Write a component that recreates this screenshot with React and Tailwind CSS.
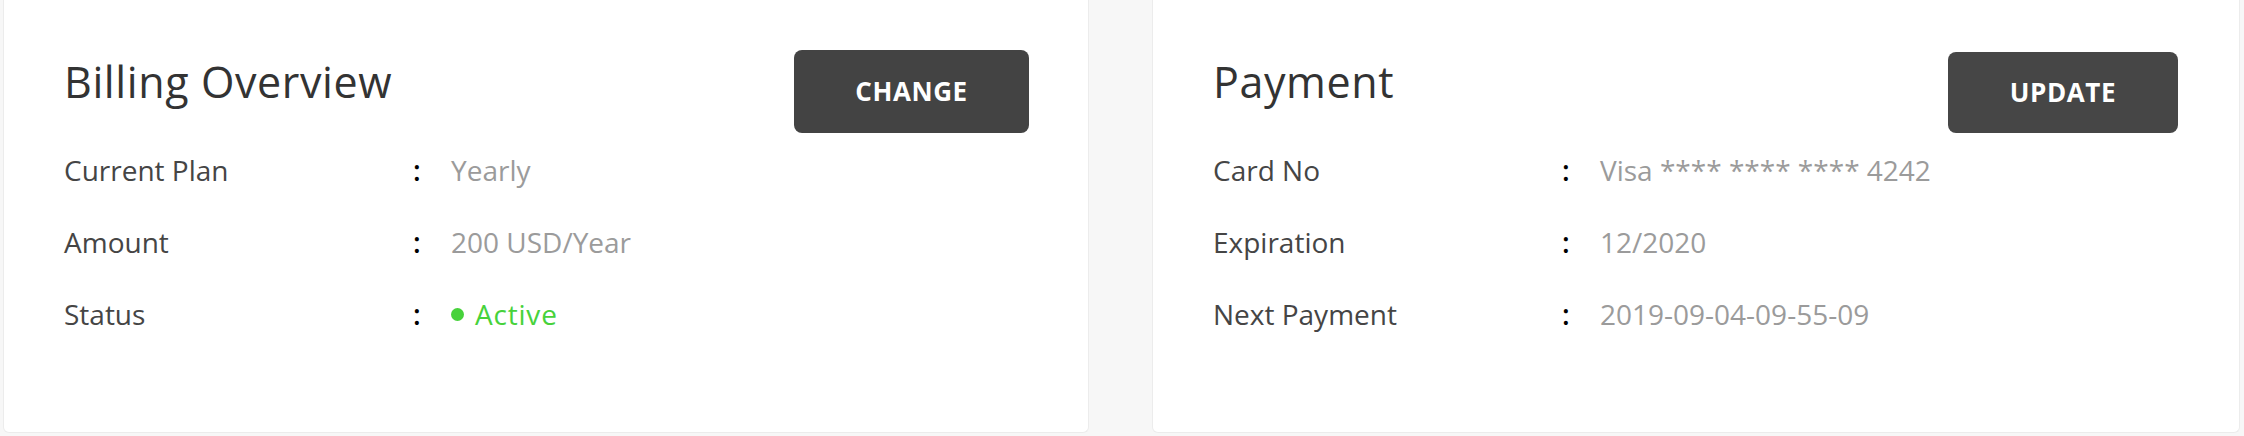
export default function App() {
  const font = { fontFamily: '"Open Sans", "Noto Sans", sans-serif' };
  const Row = ({ label, children }) => (
    <div className="flex items-center h-[72px]">
      <div className="w-[349px] text-[28px] text-[#454545]">{label}</div>
      <div className="w-[38px] text-[28px] text-black font-semibold">:</div>
      <div className="text-[28px] text-[#9b9b9b] flex items-center">{children}</div>
    </div>
  );
  return (
    <div
      className="h-[436px] w-full bg-[#f7f7f7] flex gap-[63px] pl-[3px] pr-[4px]"
      style={font}
    >
      <div className="flex-1 h-[433px] bg-white border border-t-0 border-[#ececec] rounded-b-[6px] pl-[60px] pr-[59px]">
        <div className="flex justify-between items-start">
          <h2 className="mt-[56px] text-[43px] leading-[51px] text-[#333333] tracking-[0.6px]">
            Billing Overview
          </h2>
          <button className="mt-[50px] w-[235px] h-[83px] rounded-[8px] bg-[#434343] text-white text-[26px] font-bold tracking-[0.6px]">
            CHANGE
          </button>
        </div>
        <div className="mt-[1px]">
          <Row label="Current Plan">Yearly</Row>
          <Row label="Amount">200 USD/Year</Row>
          <Row label="Status">
            <span className="inline-block w-[13px] h-[13px] rounded-full bg-[#47d23b] mr-[11px]"></span>
            <span className="text-[#47d23b] tracking-[0.8px]">Active</span>
          </Row>
        </div>
      </div>
      <div className="flex-1 h-[433px] bg-white border border-t-0 border-[#ececec] rounded-b-[6px] pl-[60px] pr-[61px]">
        <div className="flex justify-between items-start">
          <h2 className="mt-[56px] text-[43px] leading-[51px] text-[#333333] tracking-[0.6px]">
            Payment
          </h2>
          <button className="mt-[52px] w-[230px] h-[81px] rounded-[8px] bg-[#464646] text-white text-[26px] font-bold tracking-[0.6px]">
            UPDATE
          </button>
        </div>
        <div className="mt-[1px]">
          <Row label="Card No">Visa **** **** **** 4242</Row>
          <Row label="Expiration">12/2020</Row>
          <Row label="Next Payment">2019-09-04-09-55-09</Row>
        </div>
      </div>
    </div>
  );
}
